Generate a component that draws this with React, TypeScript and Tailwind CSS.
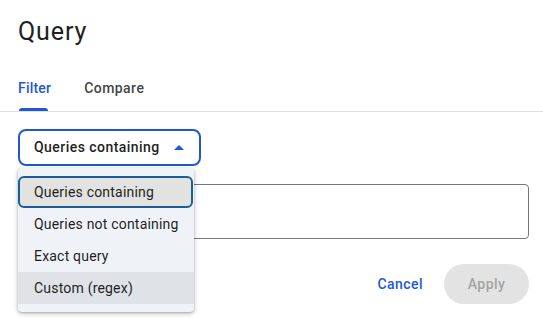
const items = ['Queries containing', 'Queries not containing', 'Exact query', 'Custom (regex)'];

export default function App() {
    return (
        <div className="relative w-[543px] h-[318px] bg-white text-[#1f1f1f] font-['Roboto',sans-serif] tracking-[0.2px] overflow-hidden">
            <h1 className="px-[18px] pt-[18px] text-[25px] leading-[28px] font-normal tracking-[0.9px]">Query</h1>

            <div className="mt-[18px] h-[48px] px-[18px] flex gap-[33px] border-b border-[#e0e0e0]">
                <div className="flex flex-col justify-end">
                    <span className="text-[14px] leading-5 font-medium text-[#1f57d6] mb-[10px]">Filter</span>
                    <div className="ml-[1px] w-[29px] h-[3px] rounded-t-[3px] bg-[#1f57d6]" />
                </div>
                <div className="flex flex-col justify-end">
                    <span className="text-[14px] leading-5 font-medium text-[#444746] tracking-[0.45px] mb-[13px]">Compare</span>
                </div>
            </div>

            <div className="pl-[18px] pr-[14px]">
                <div className="mt-[17px] w-[183px] h-[37px] border-2 border-[#1f57d6] rounded-[8px] flex items-center justify-between pl-[14px] pr-[15px]">
                    <span className="text-[14px] font-medium tracking-[0.45px]">Queries containing</span>
                    <svg width="10" height="5" viewBox="0 0 10 5">
                        <path d="M0 5 L5 0 L10 5 Z" fill="#1f57d6" />
                    </svg>
                </div>

                <div className="mt-[18px] w-[511px] h-[55px] border border-[#747775] rounded-[4px]" />

                <div className="mt-[25px] flex justify-end items-center">
                    <button className="text-[14px] font-medium text-[#1f57d6] tracking-[0.45px] mr-[21px]">Cancel</button>
                    <button className="w-[85px] h-[40px] rounded-full bg-[#e3e3e3] text-[14px] font-medium text-[#a3a3a3] tracking-[0.45px]">Apply</button>
                </div>
            </div>

            <div className="absolute left-[18px] top-[168px] w-[176px] py-2 bg-[#eff3f8] rounded-[4px] shadow-[0_1px_3px_rgba(0,0,0,0.3),0_2px_6px_rgba(0,0,0,0.12)]">
                {items.map((item, i) => (
                    <div
                        key={item}
                        className={
                            i === 0
                                ? 'h-8 flex items-center pl-[14px] text-[14px] bg-[#e2e3e1] border-2 border-[#1c5d97] rounded-[6px] mr-[1px]'
                                : i === 3
                                  ? 'h-8 flex items-center pl-4 text-[14px] bg-[#dfe3e8]'
                                  : 'h-8 flex items-center pl-4 text-[14px]'
                        }
                    >
                        {item}
                    </div>
                ))}
            </div>
        </div>
    );
}
